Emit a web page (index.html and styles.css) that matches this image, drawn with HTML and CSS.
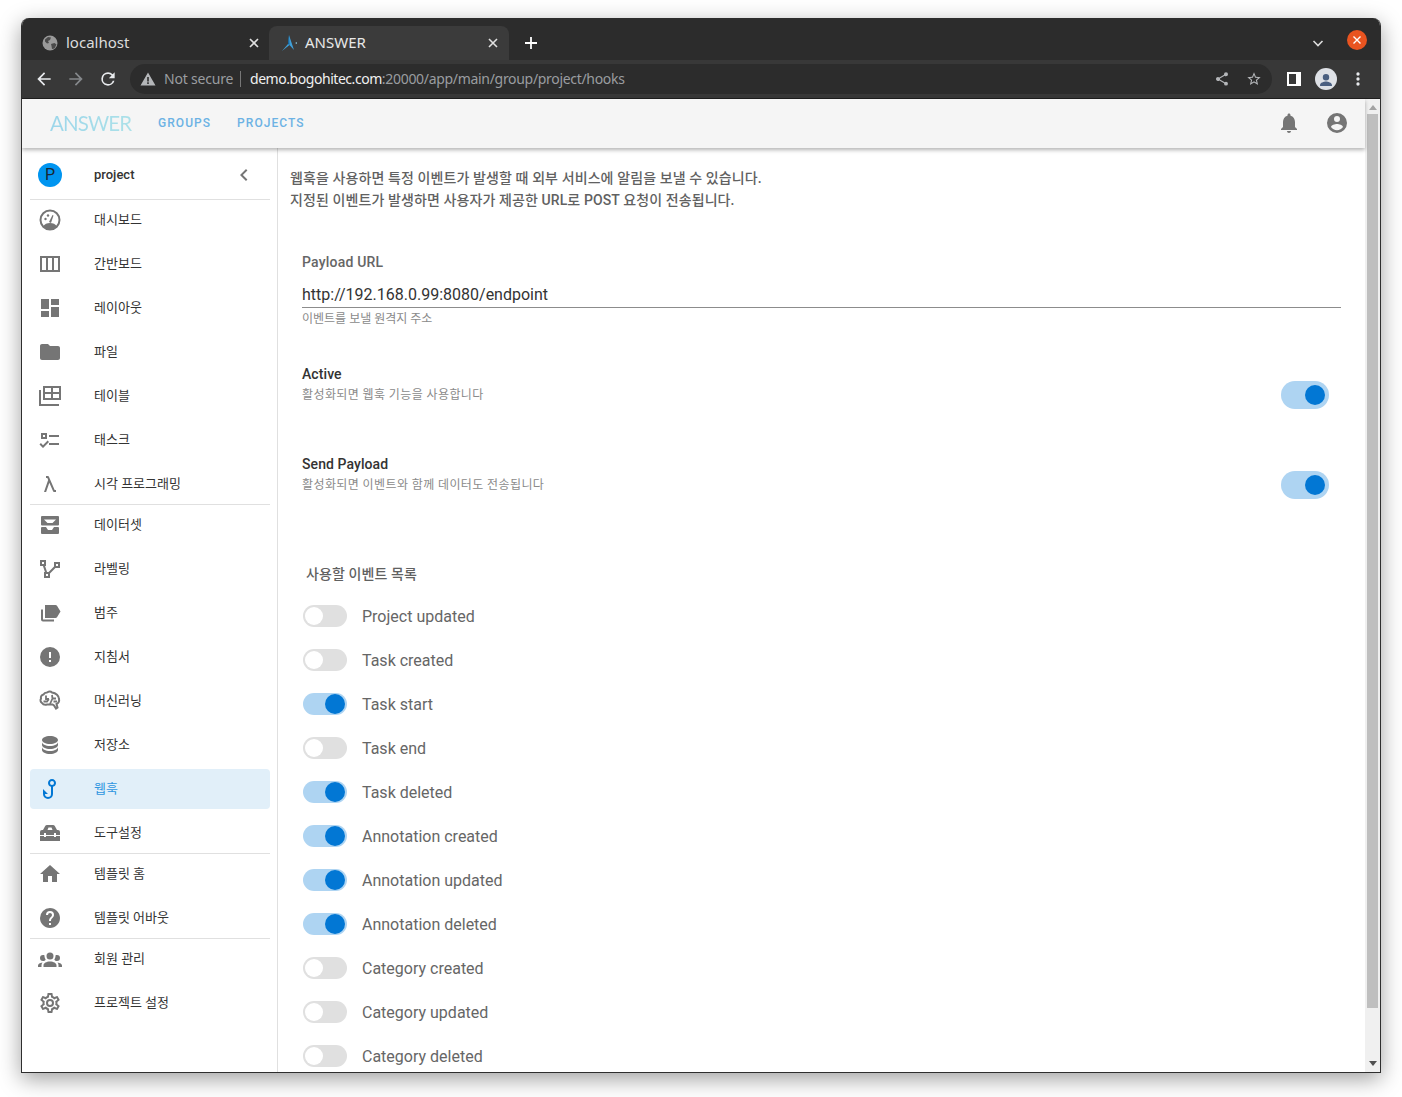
FILE: index.html
```html
<!DOCTYPE html>
<html lang="ko">
<head>
    <meta charset="UTF-8">
    <meta name="viewport" content="width=device-width, initial-scale=1.0">
    <title>ANSWER</title>
    <link rel="stylesheet" href="styles.css">
</head>
<body>
<div class="window">
    <div class="tabbar">
        <div class="tab">
            <svg class="favicon" viewBox="0 0 16 16"><circle cx="8" cy="8" r="7.500" fill="#9a9a9a"/><path d="M3 4.500l3-2.500 3 .5-1 2.500-2 1 1 2-2 .5-2-2zM9 9l3.500-1 2 1.500-2 4-2.500 .5-.5-3z" fill="#4a4a4a"/></svg>
            <span class="tab-title">localhost</span>
            <svg class="tab-close" viewBox="0 0 12 12"><path d="M2 2l8 8M10 2l-8 8"/></svg>
        </div>
        <div class="tab tab-active">
            <svg class="favicon" viewBox="0 0 16 16"><path d="M8 0L13 15 8.500 10 1 16l6-7z" fill="#3f9fd8"/><path d="M8 0L7 9l1.500 1z" fill="#0e5f99"/><circle cx="15.300" cy="8" r=".8" fill="#8fd0e8"/></svg>
            <span class="tab-title">ANSWER</span>
            <svg class="tab-close" viewBox="0 0 12 12"><path d="M2 2l8 8M10 2l-8 8"/></svg>
        </div>
        <svg class="new-tab" viewBox="0 0 14 14"><path d="M7 1v12M1 7h12"/></svg>
        <svg class="tab-menu" viewBox="0 0 12 12"><path d="M1.500 4l4.500 4.500L10.500 4"/></svg>
        <div class="win-close"><svg viewBox="0 0 10 10"><path d="M1.500 1.500l7 7M8.500 1.500l-7 7"/></svg></div>
    </div>

    <div class="toolbar">
        <button class="tool"><svg viewBox="0 0 24 24"><path d="M20 11H7.830l5.590-5.590L12 4l-8 8 8 8 1.410-1.410L7.830 13H20z" fill="#e8eaed"/></svg></button>
        <button class="tool"><svg viewBox="0 0 24 24"><path d="M4 11h12.170l-5.590-5.590L12 4l8 8-8 8-1.410-1.410L16.170 13H4z" fill="#85888b"/></svg></button>
        <button class="tool"><svg viewBox="0 0 24 24"><path d="M17.650 6.350A7.960 7.960 0 0 0 12 4a8 8 0 1 0 7.730 10h-2.080A6 6 0 1 1 12 6c1.660 0 3.140.69 4.220 1.780L13 11h7V4z" fill="#e8eaed"/></svg></button>
        <div class="omnibox">
            <svg class="warn" viewBox="0 0 16 16"><path d="M8 1.500L15.500 14.500H.5zM7.200 6v4.500h1.600V6zM7.200 11.300v1.600h1.600v-1.600z" fill="#b4b6b9" fill-rule="evenodd"/></svg>
            <span class="not-secure">Not secure</span>
            <span class="url"><b>demo.bogohitec.com</b>:20000/app/main/group/project/hooks</span>
            <svg class="omni-icon omni-share" viewBox="0 0 24 24"><path d="M18 16.080c-.76 0-1.440.3-1.960.77L8.910 12.700c.05-.23.09-.46.09-.7s-.04-.47-.09-.7l7.050-4.110c.54.5 1.250.81 2.040.81a3 3 0 1 0-3-3c0 .24.04.47.09.7L8.040 9.810A3 3 0 0 0 6 9a3 3 0 1 0 2.040 5.190l7.120 4.160c-.05.21-.08.43-.08.65a2.920 2.920 0 1 0 2.920-2.920z"/></svg>
            <svg class="omni-icon" viewBox="0 0 24 24"><path d="M22 9.240l-7.190-.62L12 2 9.190 8.630 2 9.240l5.460 4.730L5.820 21 12 17.270 18.180 21l-1.630-7.030L22 9.240zM12 15.400l-3.760 2.270 1-4.280-3.320-2.880 4.380-.38L12 6.100l1.710 4.040 4.380.38-3.320 2.880 1 4.280L12 15.400z"/></svg>
        </div>
        <button class="tool"><span class="side-panel"></span></button>
        <button class="tool"><span class="profile"><svg viewBox="0 0 24 24"><path d="M12 6.500a3.500 3.500 0 1 1 0 7 3.500 3.500 0 0 1 0-7zM5.500 18.500c0-2.500 4.300-3.800 6.500-3.800s6.500 1.300 6.500 3.800v1h-13z" fill="#4a5f80"/></svg></span></button>
        <button class="tool"><svg viewBox="0 0 24 24"><path d="M12 8a2 2 0 1 0 0-4 2 2 0 0 0 0 4zm0 2a2 2 0 1 0 0 4 2 2 0 0 0 0-4zm0 6a2 2 0 1 0 0 4 2 2 0 0 0 0-4z" fill="#e8eaed"/></svg></button>
    </div>

    <div class="app">
        <div class="page">
            <header class="appbar">
                <span class="logo">ANSWER</span>
                <a class="nav-link">GROUPS</a>
                <a class="nav-link">PROJECTS</a>
                <span class="appbar-space"></span>
                <button class="appbar-btn"><svg class="ico" viewBox="0 0 24 24"><path d="M12 22c1.100 0 2-.9 2-2h-4c0 1.100.9 2 2 2zm6-6v-5c0-3.070-1.630-5.640-4.500-6.320V4c0-.83-.67-1.500-1.500-1.500s-1.500.67-1.500 1.500v.68C7.640 5.360 6 7.920 6 11v5l-2 2v1h16v-1l-2-2z"/></svg></button>
                <button class="appbar-btn"><svg class="ico" viewBox="0 0 24 24"><path d="M12,19.200C9.500,19.200 7.290,17.920 6,16C6.030,14 10,12.900 12,12.900C14,12.900 17.970,14 18,16C16.710,17.920 14.500,19.200 12,19.200M12,5A3,3 0 0,1 15,8A3,3 0 0,1 12,11A3,3 0 0,1 9,8A3,3 0 0,1 12,5M12,2A10,10 0 0,0 2,12A10,10 0 0,0 12,22A10,10 0 0,0 22,12A10,10 0 0,0 12,2Z"/></svg></button>
            </header>

            <div class="main">
                <nav class="sidebar">
                    <div class="project-head">
                        <span class="avatar">P</span>
                        <span class="project-name">project</span>
                        <svg class="ico collapse" viewBox="0 0 24 24"><path d="M15.410 7.410L14 6l-6 6 6 6 1.410-1.410L10.830 12z"/></svg>
                    </div>

                    <div class="nav-group">
                        <a class="nav-item"><svg class="ico" viewBox="0 0 24 24"><circle cx="12" cy="12" r="9.500" fill="none" stroke="#757575" stroke-width="2"/><path d="M5 18.500C6.500 16 9 15 12 15s5.500 1 7 3.500a9.500 9.500 0 0 1-14 0z"/><path d="M11 14l3.500-7 1 .5-2.500 7.500z"/><circle cx="7.500" cy="11" r="1.200"/><circle cx="10" cy="7.500" r="1.200"/></svg><span>대시보드</span></a>
                        <a class="nav-item"><svg class="ico" viewBox="0 0 24 24"><path d="M2 4h20v16H2zM4 6v12h4V6zm6 0v12h4V6zm6 0v12h4V6z" fill-rule="evenodd"/></svg><span>간반보드</span></a>
                        <a class="nav-item"><svg class="ico" viewBox="0 0 24 24"><path d="M3 13h8V3H3v10zm0 8h8v-6H3v6zm10 0h8V11h-8v10zm0-18v6h8V3h-8z"/></svg><span>레이아웃</span></a>
                        <a class="nav-item"><svg class="ico" viewBox="0 0 24 24"><path d="M10 4H4c-1.100 0-1.990.9-1.990 2L2 18c0 1.100.9 2 2 2h16c1.100 0 2-.9 2-2V8c0-1.100-.9-2-2-2h-8l-2-2z"/></svg><span>파일</span></a>
                        <a class="nav-item"><svg class="ico" viewBox="0 0 24 24"><path d="M5 3h18v14H5zM7 5v4h6V5zm8 0v4h6V5zM7 11v4h6v-4zm8 0v4h6v-4zM1 7h2v14h18v2H1z" fill-rule="evenodd" transform="translate(0 -1)"/></svg><span>테이블</span></a>
                        <a class="nav-item"><svg class="ico" viewBox="0 0 24 24"><path d="M3,5H9V11H3V5M5,7V9H7V7H5M11,7H21V9H11V7M11,15H21V17H11V15M5,20L1.500,16.500L2.910,15.090L5,17.170L9.590,12.590L11,14L5,20Z"/></svg><span>태스크</span></a>
                        <a class="nav-item"><svg class="ico" viewBox="0 0 24 24"><path d="M6,20L10.160,7.910L9.340,6H8V4H10C10.420,4 10.780,4.260 10.930,4.630L16.660,18H18V20H16C15.570,20 15.210,19.730 15.070,19.360L11.330,10.650L8.120,20H6Z"/></svg><span>시각 프로그래밍</span></a>
                    </div>

                    <div class="nav-group">
                        <a class="nav-item"><svg class="ico" viewBox="0 0 24 24"><path d="M4 3h16a1 1 0 0 1 1 1v7.500a1 1 0 0 1-1 1H4a1 1 0 0 1-1-1V4a1 1 0 0 1 1-1zm2 3.500l3.500 3.500h5L18 6.500zM4 14h4l2 3h4l2-3h4a1 1 0 0 1 1 1v5a1 1 0 0 1-1 1H4a1 1 0 0 1-1-1v-5a1 1 0 0 1 1-1z" fill-rule="evenodd"/></svg><span>데이터셋</span></a>
                        <a class="nav-item"><svg class="ico" viewBox="0 0 24 24"><path d="M2 3V9H4.950L6.950 15H6V21H12V16.410L17.410 11H22V5H16V9.570L10.590 15H9.060L7.050 9H8V3H2M4 5H6V7H4V5M18 7H20V9H18V7M8 17H10V19H8V17Z"/></svg><span>라벨링</span></a>
                        <a class="nav-item"><svg class="ico" viewBox="0 0 24 24"><path d="M7 4h10.500c.6 0 1.200.3 1.500.8l3.500 5.700-3.500 5.700c-.3.5-.9.8-1.500.8H7zM3 8.500h2v10h11v2H5a2 2 0 0 1-2-2z"/></svg><span>범주</span></a>
                        <a class="nav-item"><svg class="ico" viewBox="0 0 24 24"><path d="M13,13H11V7H13M13,17H11V15H13M12,2A10,10 0 0,0 2,12A10,10 0 0,0 12,22A10,10 0 0,0 22,12A10,10 0 0,0 12,2Z"/></svg><span>지침서</span></a>
                        <a class="nav-item"><svg class="ico" viewBox="0 0 24 24"><path d="M9 3.500C7 3.500 6 4.500 5.500 5.500 3.500 6 2.500 7.500 3 9.500c-1 1.500-.5 3.500 1 4.500 1 1.500 3 2 5 1.500h5.500l1.500 1 2 3 1.500-1-1-3.500c2-1 3-3 2.500-5 0-3-3-6-7-6.500C13 2.500 11.500 2 9 3.500z" fill="none" stroke="#757575" stroke-width="2"/><path d="M8 6.500v3.500h3M5.500 12.500H9l2-2.500M14 6l.5 3.500H18M14.500 9.500L12 15M15.500 12.500H19" fill="none" stroke="#757575" stroke-width="1.800"/></svg><span>머신러닝</span></a>
                        <a class="nav-item"><svg class="ico" viewBox="0 0 24 24"><path d="M12,3C7.580,3 4,4.790 4,7C4,9.210 7.580,11 12,11C16.420,11 20,9.210 20,7C20,4.790 16.420,3 12,3M4,9V12C4,14.210 7.580,16 12,16C16.420,16 20,14.210 20,12V9C20,11.210 16.420,13 12,13C7.580,13 4,11.210 4,9M4,14V17C4,19.210 7.580,21 12,21C16.420,21 20,19.210 20,17V14C20,16.210 16.420,18 12,18C7.580,18 4,16.210 4,14Z"/></svg><span>저장소</span></a>
                        <a class="nav-item nav-item-active"><svg class="ico" viewBox="0 0 24 24"><path d="M18,6C18,7.820 16.760,9.410 15,9.860V17A5,5 0 0,1 10,22A5,5 0 0,1 5,17V12L10,17H7A3,3 0 0,0 10,20A3,3 0 0,0 13,17V9.860C11.230,9.400 10,7.800 10,5.970C10,3.760 11.800,2 14,2C16.220,2 18,3.790 18,6M14,8A2,2 0 0,0 16,6A2,2 0 0,0 14,4A2,2 0 0,0 12,6A2,2 0 0,0 14,8Z"/></svg><span>웹훅</span></a>
                        <a class="nav-item"><svg class="ico" viewBox="0 0 24 24"><path d="M9 4h6c.8 0 1.400.4 1.800 1L19 9h1a2 2 0 0 1 2 2v3h-4v-2h-2v2H8v-2H6v2H2v-3a2 2 0 0 1 2-2h1l2.200-4c.4-.6 1-1 1.800-1zM9.500 9h5l-1-2.500h-3zM2 15h4v1h2v-1h8v1h2v-1h4v5H2z" fill-rule="evenodd"/></svg><span>도구설정</span></a>
                    </div>

                    <div class="nav-group">
                        <a class="nav-item"><svg class="ico" viewBox="0 0 24 24"><path d="M10 20v-6h4v6h5v-8h3L12 3 2 12h3v8z"/></svg><span>템플릿 홈</span></a>
                        <a class="nav-item"><svg class="ico" viewBox="0 0 24 24"><path d="M15.070,11.250L14.170,12.170C13.450,12.890 13,13.500 13,15H11V14.500C11,13.390 11.450,12.390 12.170,11.670L13.410,10.410C13.780,10.050 14,9.550 14,9C14,7.890 13.100,7 12,7A2,2 0 0,0 10,9H8A4,4 0 0,1 12,5A4,4 0 0,1 16,9C16,9.880 15.640,10.670 15.070,11.250M13,19H11V17H13M12,2A10,10 0 0,0 2,12C2,17.530 6.470,22 12,22C17.530,22 22,17.500 22,12C22,6.470 17.500,2 12,2Z"/></svg><span>템플릿 어바웃</span></a>
                    </div>

                    <div class="nav-group">
                        <a class="nav-item"><svg class="ico" viewBox="0 0 24 24"><path d="M12,5.500A3.500,3.500 0 0,1 15.500,9A3.500,3.500 0 0,1 12,12.500A3.500,3.500 0 0,1 8.500,9A3.500,3.500 0 0,1 12,5.500M5,8C5.560,8 6.080,8.150 6.530,8.420C6.380,9.850 6.800,11.270 7.660,12.380C7.160,13.340 6.160,14 5,14A3,3 0 0,1 2,11A3,3 0 0,1 5,8M19,8A3,3 0 0,1 22,11A3,3 0 0,1 19,14C17.840,14 16.840,13.340 16.340,12.380C17.200,11.270 17.620,9.850 17.470,8.420C17.920,8.150 18.440,8 19,8M5.500,18.250C5.500,16.180 8.410,14.500 12,14.500C15.590,14.500 18.500,16.180 18.500,18.250V20H5.500V18.250M0,20V18.500C0,17.110 1.890,15.940 4.450,15.600C3.860,16.280 3.500,17.220 3.500,18.250V20H0M24,20H20.500V18.250C20.500,17.220 20.140,16.280 19.550,15.600C22.110,15.940 24,17.110 24,18.500V20Z"/></svg><span>회원 관리</span></a>
                        <a class="nav-item"><svg class="ico" viewBox="0 0 24 24"><path d="M12,8A4,4 0 0,1 16,12A4,4 0 0,1 12,16A4,4 0 0,1 8,12A4,4 0 0,1 12,8M12,10A2,2 0 0,0 10,12A2,2 0 0,0 12,14A2,2 0 0,0 14,12A2,2 0 0,0 12,10M10,22C9.750,22 9.540,21.820 9.500,21.580L9.130,18.930C8.500,18.680 7.960,18.340 7.440,17.940L4.950,18.950C4.730,19.030 4.460,18.950 4.340,18.730L2.340,15.270C2.210,15.050 2.270,14.780 2.460,14.630L4.570,12.970L4.500,12L4.570,11L2.460,9.370C2.270,9.220 2.210,8.950 2.340,8.730L4.340,5.270C4.460,5.050 4.730,4.960 4.950,5.050L7.440,6.050C7.960,5.660 8.500,5.320 9.130,5.070L9.500,2.420C9.540,2.180 9.750,2 10,2H14C14.250,2 14.460,2.180 14.500,2.420L14.870,5.070C15.500,5.320 16.040,5.660 16.560,6.050L19.050,5.050C19.270,4.960 19.540,5.050 19.660,5.270L21.660,8.730C21.790,8.950 21.730,9.220 21.540,9.370L19.430,11L19.500,12L19.430,13L21.540,14.630C21.730,14.780 21.790,15.050 21.660,15.270L19.660,18.730C19.540,18.950 19.270,19.040 19.050,18.950L16.560,17.950C16.040,18.340 15.500,18.680 14.870,18.930L14.500,21.580C14.460,21.820 14.250,22 14,22H10M11.250,4L10.880,6.610C9.680,6.860 8.620,7.500 7.850,8.390L5.440,7.350L4.690,8.650L6.800,10.200C6.400,11.370 6.400,12.640 6.800,13.800L4.680,15.360L5.430,16.660L7.860,15.620C8.630,16.500 9.680,17.140 10.870,17.380L11.240,20H12.760L13.130,17.390C14.320,17.140 15.370,16.500 16.140,15.620L18.570,16.660L19.320,15.360L17.200,13.810C17.600,12.640 17.600,11.370 17.200,10.200L19.310,8.650L18.560,7.350L16.150,8.390C15.380,7.500 14.320,6.860 13.120,6.620L12.750,4H11.250Z"/></svg><span>프로젝트 설정</span></a>
                    </div>
                </nav>

                <section class="content">
                    <p class="intro">웹훅을 사용하면 특정 이벤트가 발생할 때 외부 서비스에 알림을 보낼 수 있습니다.<br>지정된 이벤트가 발생하면 사용자가 제공한 URL로 POST 요청이 전송됩니다.</p>

                    <div class="form">
                        <label class="field-label">Payload URL</label>
                        <div class="url-input">http://192.168.0.99:8080/endpoint</div>
                        <p class="hint hint-url">이벤트를 보낼 원격지 주소</p>

                        <div class="setting setting-first">
                            <div>
                                <div class="setting-title">Active</div>
                                <p class="hint hint-wide">활성화되면 웹훅 기능을 사용합니다</p>
                            </div>
                            <span class="switch switch-big on"></span>
                        </div>
                        <div class="setting">
                            <div>
                                <div class="setting-title">Send Payload</div>
                                <p class="hint hint-wide">활성화되면 이벤트와 함께 데이터도 전송됩니다</p>
                            </div>
                            <span class="switch switch-big on"></span>
                        </div>
                    </div>

                    <h3 class="events-title">사용할 이벤트 목록</h3>
                    <ul class="events">
                        <li><span class="switch"></span>Project updated</li>
                        <li><span class="switch"></span>Task created</li>
                        <li><span class="switch on"></span>Task start</li>
                        <li><span class="switch"></span>Task end</li>
                        <li><span class="switch on"></span>Task deleted</li>
                        <li><span class="switch on"></span>Annotation created</li>
                        <li><span class="switch on"></span>Annotation updated</li>
                        <li><span class="switch on"></span>Annotation deleted</li>
                        <li><span class="switch"></span>Category created</li>
                        <li><span class="switch"></span>Category updated</li>
                        <li><span class="switch"></span>Category deleted</li>
                    </ul>
                </section>
            </div>
        </div>

        <div class="scrollbar">
            <span class="arrow arrow-up"></span>
            <span class="thumb"></span>
            <span class="arrow arrow-down"></span>
        </div>
    </div>
</div>
</body>
</html>
```

FILE: styles.css
```css
* {
  margin: 0;
  padding: 0;
  box-sizing: border-box;
}

html, body {
  height: 100%;
  overflow: hidden;
}

body {
  padding: 18px 0 0 21px;
  background-color: white;
  font-family: Roboto, "Noto Sans CJK KR", sans-serif;
}

.window {
  width: 1360px;
  height: 1055px;
  border: 1px solid #2e2e2e;
  border-top: none;
  border-radius: 8px 8px 0 0;
  box-shadow: 0 6px 22px rgba(0, 0, 0, 0.38);
  display: flex;
  flex-direction: column;
  overflow: hidden;
}

/* Browser chrome */
.tabbar {
  height: 42px;
  padding: 8px 0 0 7px;
  background-color: #2c2c2c;
  display: flex;
  align-items: stretch;
  flex-shrink: 0;
}

.tab {
  width: 240px;
  padding: 0 9px 0 13px;
  display: flex;
  align-items: center;
  color: #dcdcdc;
  font-family: "Noto Sans", sans-serif;
  font-size: 15px;
}

.tab-title {
  margin-top: -2px;
}

.tab-active {
  padding: 0 10px 0 12px;
  background-color: #3b3b3b;
  border-radius: 8px 8px 0 0;
  color: #e8e8e8;
}

.favicon {
  width: 16px;
  height: 16px;
  margin-right: 8px;
}

.tab-close {
  width: 12px;
  height: 12px;
  margin-left: auto;
  fill: none;
  stroke: #e0e0e0;
  stroke-width: 1.6;
}

.new-tab {
  width: 14px;
  height: 14px;
  margin: 10px 0 0 15px;
  fill: none;
  stroke: white;
  stroke-width: 1.8;
}

.tab-menu {
  width: 12px;
  height: 12px;
  margin: 11px 0 0 auto;
  fill: none;
  stroke: #dcdcdc;
  stroke-width: 1.6;
}

.win-close {
  width: 20px;
  height: 20px;
  margin: 4px 13px 0 23px;
  border-radius: 50%;
  background-color: #e95420;
  display: flex;
  align-items: center;
  justify-content: center;
}

.win-close svg {
  width: 10px;
  height: 10px;
  fill: none;
  stroke: white;
  stroke-width: 1.4;
}

.toolbar {
  height: 39px;
  padding: 0 6px;
  background-color: #383838;
  border-bottom: 1px solid #1f1f1f;
  display: flex;
  align-items: center;
  flex-shrink: 0;
}

.tool {
  width: 32px;
  height: 32px;
  border: none;
  background: none;
  display: flex;
  align-items: center;
  justify-content: center;
}

.tool svg {
  width: 20px;
  height: 20px;
}

.omnibox {
  flex: 1;
  height: 30px;
  margin: 0 6px;
  padding: 0 10px 0 10px;
  background-color: #2c2c2c;
  border-radius: 15px;
  display: flex;
  align-items: center;
  font-family: "Noto Sans", sans-serif;
  font-size: 14px;
}

.warn {
  width: 16px;
  height: 16px;
  margin-right: 8px;
}

.not-secure {
  width: 77px;
  color: #9a9da0;
  border-right: 1px solid #777;
  line-height: 16px;
  letter-spacing: -0.2px;
  white-space: nowrap;
}

.url {
  margin: -2px 0 0 9px;
  color: #9a9da0;
  letter-spacing: -0.31px;
  white-space: nowrap;
}

.url b {
  color: #f0f0f0;
  font-weight: 400;
  letter-spacing: -0.45px;
}

.omni-icon {
  width: 16px;
  height: 16px;
  margin-left: 16px;
  fill: #b4b6b9;
}

.omni-share {
  margin-left: auto;
}

.side-panel {
  width: 14px;
  height: 14px;
  border: solid white;
  border-width: 2px 5px 2px 2px;
  display: block;
}

.profile {
  width: 22px;
  height: 22px;
  border-radius: 50%;
  background-color: #dee1e6;
  overflow: hidden;
  display: block;
}

.profile svg {
  width: 22px;
  height: 22px;
  display: block;
}

/* App */
.app {
  flex: 1;
  display: flex;
  min-height: 0;
}

.page {
  flex: 1;
  min-width: 0;
  display: flex;
  flex-direction: column;
  background-color: white;
}

.appbar {
  height: 49px;
  padding: 0 4px 2px 28px;
  background-color: #f5f5f5;
  box-shadow: 0 2px 4px rgba(0, 0, 0, 0.3);
  display: flex;
  align-items: center;
  position: relative;
  flex-shrink: 0;
}

.logo {
  width: 108px;
  font-family: Lato, sans-serif;
  font-size: 20.5px;
  font-weight: 400;
  letter-spacing: -0.9px;
  background: linear-gradient(90deg, #9cd6ea, #b0e4e8);
  -webkit-background-clip: text;
  background-clip: text;
  color: transparent;
}

.nav-link {
  margin-right: 26px;
  color: #6cb2e4;
  font-size: 12px;
  font-weight: 500;
  letter-spacing: 1.05px;
}

.appbar-space {
  flex: 1;
}

.appbar-btn {
  width: 48px;
  height: 47px;
  border: none;
  background: none;
  display: flex;
  align-items: center;
  justify-content: center;
}

.ico {
  width: 24px;
  height: 24px;
  fill: #757575;
  flex-shrink: 0;
}

.main {
  flex: 1;
  display: flex;
  min-height: 0;
}

/* Sidebar */
.sidebar {
  width: 256px;
  padding: 0 7px 0 8px;
  border-right: 1px solid #e0e0e0;
  flex-shrink: 0;
}

.project-head {
  height: 52px;
  padding: 3px 14px 0 8px;
  border-bottom: 1px solid #e0e0e0;
  display: flex;
  align-items: center;
}

.avatar {
  width: 24px;
  height: 24px;
  border-radius: 50%;
  background-color: #0095f0;
  color: #1a2733;
  font-size: 16px;
  line-height: 24px;
  text-align: center;
  flex-shrink: 0;
}

.project-name {
  margin: -2px 0 0 32px;
  color: #333;
  font-size: 13px;
  font-weight: 500;
}

.collapse {
  margin-left: auto;
}

.nav-group {
  border-bottom: 1px solid #e0e0e0;
}

.nav-group:last-child {
  border-bottom: none;
}

.nav-item {
  height: 40px;
  margin-bottom: 4px;
  padding: 0 8px;
  border-radius: 4px;
  color: #333;
  font-size: 13px;
  display: flex;
  align-items: center;
}

.nav-item:last-child {
  margin-bottom: 0;
}

.nav-item span {
  margin-left: 32px;
  padding-bottom: 4px;
}

.nav-item-active {
  background-color: #e1eff9;
  color: #2f96e0;
}

.nav-item-active .ico {
  fill: #0277d4;
}

/* Content */
.content {
  flex: 1;
  min-width: 0;
  padding: 19px 12px 0;
  overflow: hidden;
}

.intro {
  color: #616161;
  font-size: 14px;
  font-weight: 500;
  line-height: 22px;
  letter-spacing: 0.1px;
}

.form {
  padding: 41px 12px 0;
}

.field-label {
  display: block;
  color: #666;
  font-size: 14px;
  font-weight: 500;
  line-height: 20px;
  letter-spacing: 0.2px;
}

.url-input {
  height: 36px;
  padding-top: 12px;
  border-bottom: 1px solid #8c8c8c;
  color: #333;
  font-size: 16px;
  line-height: 22px;
}

.hint {
  color: #8a8a8a;
  font-size: 12px;
  line-height: 20px;
}

.hint-url {
  margin-top: 1px;
}

.hint-wide {
  letter-spacing: 0.4px;
}

.setting {
  height: 90px;
  padding-right: 12px;
  display: flex;
  align-items: flex-start;
  justify-content: space-between;
}

.setting-first {
  margin-top: 35px;
}

.setting-title {
  color: #333;
  font-size: 14px;
  font-weight: 500;
  line-height: 21px;
  letter-spacing: 0.08px;
}

.setting .switch-big {
  margin-top: 17px;
}

.events-title {
  margin: 19px 0 0 16px;
  color: #616161;
  font-size: 14px;
  font-weight: 500;
  line-height: 22px;
  letter-spacing: 0.1px;
}

.events {
  margin: 9px 0 0 13px;
  list-style: none;
}

.events li {
  height: 44px;
  color: #666;
  font-size: 16px;
  display: flex;
  align-items: center;
}

.switch {
  width: 44px;
  height: 22px;
  margin-right: 15px;
  border-radius: 11px;
  background-color: #e0e0e0;
  display: flex;
  align-items: center;
  padding: 0 2px;
  flex-shrink: 0;
}

.switch::after {
  content: "";
  width: 18px;
  height: 18px;
  border-radius: 50%;
  background-color: white;
}

.switch.on {
  background-color: #aed4f2;
  justify-content: flex-end;
}

.switch.on::after {
  background-color: #0277d4;
  width: 20px;
  height: 20px;
}

.switch-big {
  width: 48px;
  height: 28px;
  margin-right: 0;
  border-radius: 14px;
  padding: 0 4px;
}

/* Scrollbar */
.scrollbar {
  width: 15px;
  background-color: #f0f0f0;
  display: flex;
  flex-direction: column;
  align-items: center;
  flex-shrink: 0;
}

.arrow {
  width: 0;
  height: 0;
  border-left: 4px solid transparent;
  border-right: 4px solid transparent;
}

.arrow-up {
  margin: 6px 0 4px;
  border-bottom: 5px solid #a3a3a3;
}

.thumb {
  width: 11px;
  height: 894px;
  background-color: #bfbfbf;
}

.arrow-down {
  margin: auto 0 6px;
  border-top: 5px solid #505050;
}
```
